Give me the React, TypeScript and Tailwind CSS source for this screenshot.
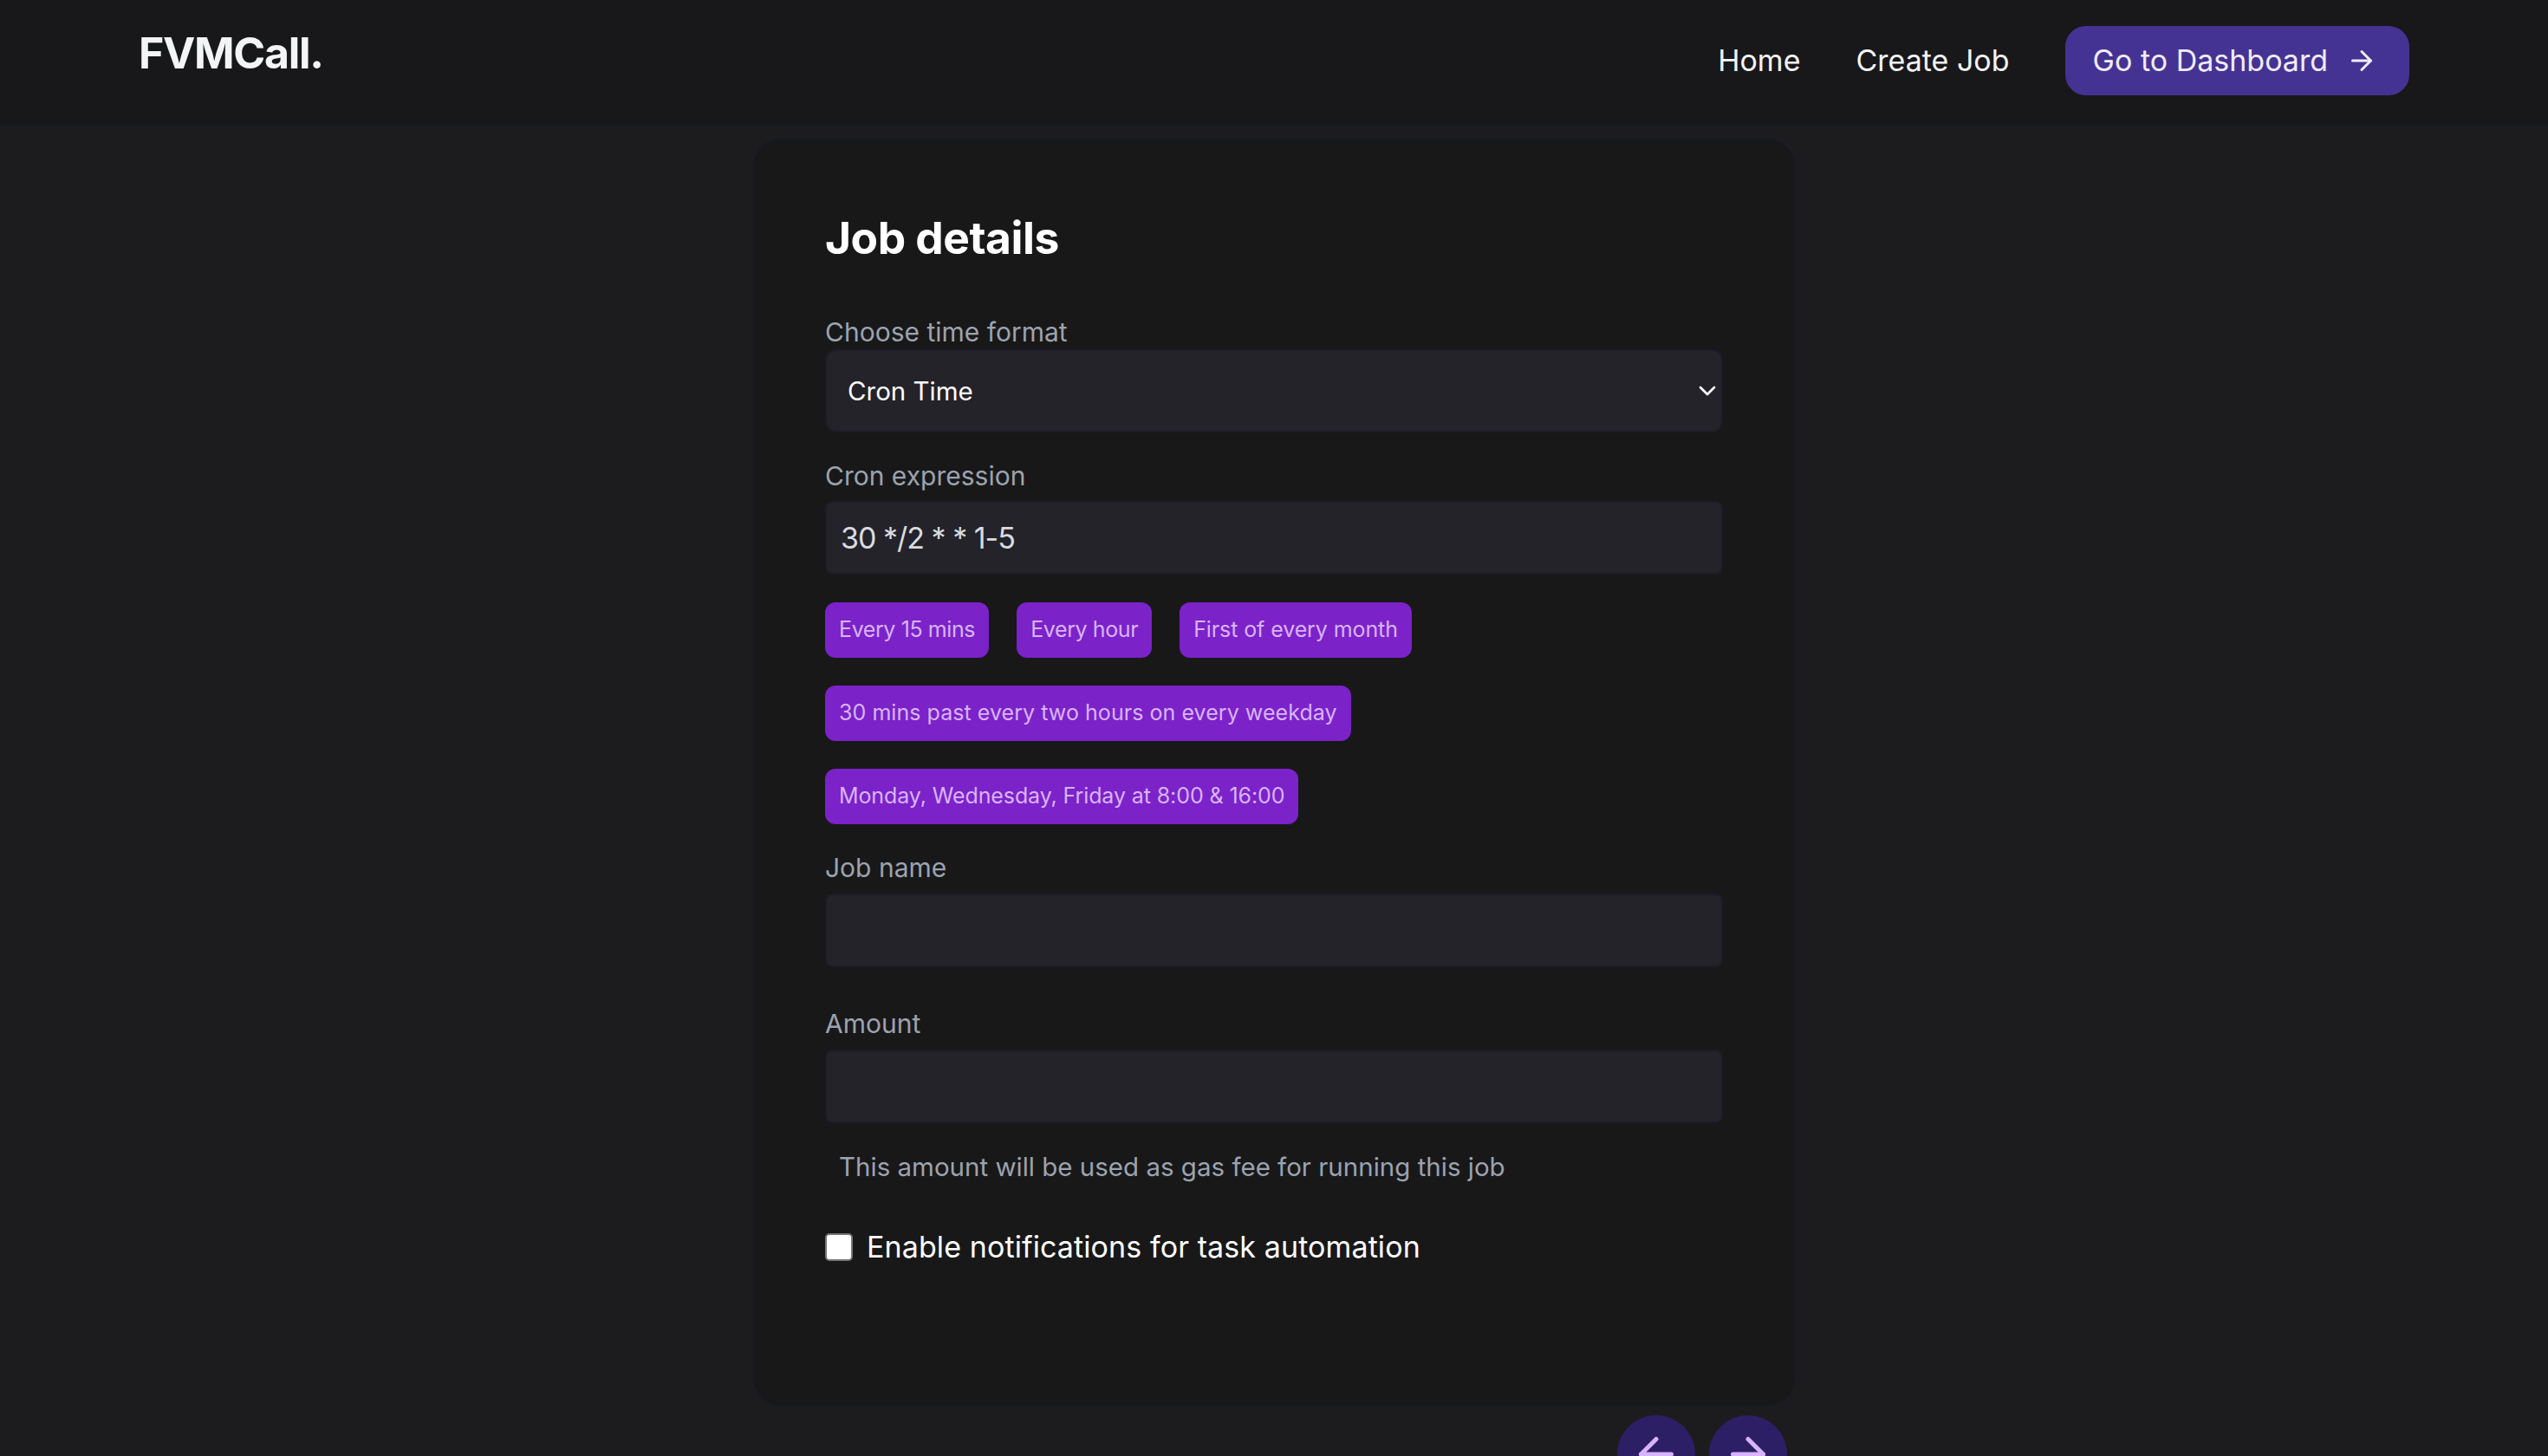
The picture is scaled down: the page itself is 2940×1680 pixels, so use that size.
import { ArrowLeft, ArrowRight, ChevronDown } from "lucide-react";

const presetRows = [
  [
    { text: "Every 15 mins", spacing: "tracking-[-0.4px]" },
    { text: "Every hour", spacing: "tracking-[-0.4px]" },
    { text: "First of every month", spacing: "tracking-[-0.1px]" },
  ],
  [{ text: "30 mins past every two hours on every weekday", spacing: "tracking-[0.05px]" }],
  [{ text: "Monday, Wednesday, Friday at 8:00 & 16:00", spacing: "tracking-[-0.1px]" }],
];

const labelClass = "block h-10 text-[30px] leading-10 text-[#9ca3af]";
const inputClass =
  "block w-full h-[85px] px-4 rounded-lg border-2 border-[#1b1c26] bg-[#232329] text-[34px] tracking-[-1px] text-[#d9dbe0] outline-none";

export default function App() {
  return (
    <div className="h-screen overflow-hidden bg-[#1c1c1e] font-['Inter',sans-serif]">
      {/* Top bar */}
      <header className="flex items-start justify-between h-[144px] pl-[160px] pr-[160px] pt-[30px] bg-[#18181a] border-b-2 border-[#141820]">
        <div className="text-[50px] leading-[62px] font-bold text-[#f3f4f6] tracking-[-1.3px]">FVMCall.</div>
        <nav className="flex items-center h-20 text-[#f3f4f6] text-[34px]">
          <a className="mr-[64px] pb-px">Home</a>
          <a className="mr-[64px] pb-px">Create Job</a>
          <button className="flex items-center h-20 pl-8 pr-[37px] pb-px rounded-3xl bg-[#453393] text-[#f0ecfb]">
            Go to Dashboard
            <ArrowRight className="ml-[21px] w-9 h-9" strokeWidth={2} />
          </button>
        </nav>
      </header>

      <main className="w-[1202px] mx-auto pt-4">
        {/* Form card */}
        <div className="h-[1462px] px-[81px] pt-[70px] rounded-[32px] border-2 border-[#161922] bg-[#181819]">
          <h2 className="text-[51.5px] leading-[84px] font-bold text-white tracking-[-0.5px]">Job details</h2>

          <label className={`${labelClass} mt-[47px]`}>Choose time format</label>
          <div className="relative">
            <select className="block w-full h-24 pl-6 appearance-none rounded-xl border-2 border-[#1b1c26] bg-[#232329] text-[29.5px] text-white outline-none">
              <option>Cron Time</option>
            </select>
            <ChevronDown className="absolute right-[2px] top-8 w-8 h-8 text-white" strokeWidth={2} />
          </div>

          <label className={`${labelClass} mt-[30px]`}>Cron expression</label>
          <input className={`${inputClass} mt-[9px]`} defaultValue="30 */2 * * 1-5" />

          <div className="mt-8 flex flex-col gap-8">
            {presetRows.map((row) => (
              <div key={row[0].text} className="flex gap-8">
                {row.map((preset) => (
                  <button
                    key={preset.text}
                    className={`h-16 px-4 rounded-xl bg-[#7b22c9] text-[25px] text-[#d8b4fe] whitespace-nowrap ${preset.spacing}`}
                  >
                    {preset.text}
                  </button>
                ))}
              </div>
            ))}
          </div>

          <label className={`${labelClass} mt-[30px]`}>Job name</label>
          <input className={`${inputClass} mt-[10px]`} />

          <label className={`${labelClass} mt-[45px]`}>Amount</label>
          <input className={`${inputClass} mt-[10px]`} />

          <p className="mt-[30px] pl-4 h-10 text-[29.5px] leading-10 text-[#9ca3af]">
            This amount will be used as gas fee for running this job
          </p>

          <label className="mt-[57px] flex items-center h-8">
            <input
              type="checkbox"
              className="appearance-none w-8 h-8 rounded-[5px] border-2 border-[#767676] bg-white"
            />
            <span className="ml-4 pb-0.5 text-[34px] tracking-[0.1px] text-white">Enable notifications for task automation</span>
          </label>
        </div>

        {/* Step buttons */}
        <div className="flex justify-end gap-4 mt-[11px] pr-[9px]">
          <button className="flex items-center justify-center w-[90px] h-[90px] rounded-full bg-[#2d1f66] text-[#d8b4fe]">
            <ArrowLeft className="w-[60px] h-[60px]" strokeWidth={2} />
          </button>
          <button className="flex items-center justify-center w-[90px] h-[90px] rounded-full bg-[#2d1f66] text-[#d8b4fe]">
            <ArrowRight className="w-[60px] h-[60px]" strokeWidth={2} />
          </button>
        </div>
      </main>
    </div>
  );
}
